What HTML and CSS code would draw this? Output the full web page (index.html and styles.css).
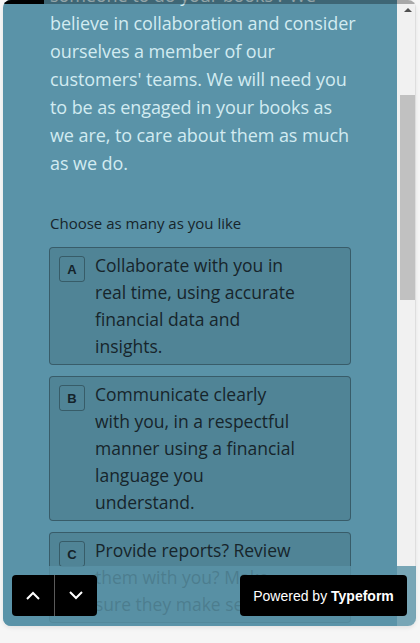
FILE: index.html
```html
<!DOCTYPE html>
<html>
<head>
<meta charset="utf-8">
<link rel="stylesheet" href="styles.css">
</head>
<body>
<div class="card">
  <div class="viewport">
    <div class="content">
      <p class="intro">someone to do your books'? We<br>believe in collaboration and consider<br>ourselves a member of our<br>customers' teams. We will need you<br>to be as engaged in your books as<br>we are, to care about them as much<br>as we do.</p>
      <p class="hint">Choose as many as you like</p>
      <ul class="choices">
        <li class="choice"><span class="key">A</span><span class="label">Collaborate with you in<br>real time, using accurate<br>financial data and<br>insights.</span></li>
        <li class="choice"><span class="key">B</span><span class="label">Communicate clearly<br>with you, in a respectful<br>manner using a financial<br>language you<br>understand.</span></li>
        <li class="choice"><span class="key">C</span><span class="label">Provide reports? Review<br>them with you? Make<br>sure they make sense</span></li>
      </ul>
    </div>
  </div>
  <div class="scrollbar">
    <span class="arrow"></span>
    <span class="thumb"></span>
  </div>
  <div class="progress"><span class="progress-fill"></span></div>
  <div class="footer">
    <div class="nav">
      <button class="nav-btn" aria-label="Previous">
        <svg width="14" height="9" viewBox="0 0 14 9"><polyline points="1,8 7,2 13,8" fill="none" stroke="#fff" stroke-width="2"/></svg>
      </button>
      <span class="divider"></span>
      <button class="nav-btn" aria-label="Next">
        <svg width="14" height="9" viewBox="0 0 14 9"><polyline points="1,1 7,7 13,1" fill="none" stroke="#fff" stroke-width="2"/></svg>
      </button>
    </div>
    <a class="powered">Powered by&nbsp;<b>Typeform</b></a>
  </div>
</div>
</body>
</html>
```
FILE: styles.css
```css
* { box-sizing: border-box; }
html, body { margin: 0; padding: 0; }
body {
  background: #f6f6f6;
  width: 420px;
  height: 643px;
  overflow: hidden;
}
.card {
  position: relative;
  margin-left: 3px;
  width: 413px;
  height: 626px;
  border-radius: 8px;
  overflow: hidden;
  display: flex;
  box-shadow: 0 2px 4px rgba(0,0,0,0.08);
}
.viewport {
  flex: 1;
  background: #5a93a8;
  overflow: hidden;
}
.content {
  padding-left: 47px;
  width: 349px;
  font-family: "Open Sans", "Noto Sans", sans-serif;
}
.intro {
  margin: -19px 0 0 0;
  font-size: 18px;
  line-height: 28px;
  letter-spacing: -0.08px;
  color: #d2ebf1;
  white-space: nowrap;
}
.hint {
  margin: 36px 0 0 0;
  font-size: 15px;
  line-height: 20px;
  color: #17252b;
}
.choices {
  list-style: none;
  margin: 14px 0 0 -1px;
  padding: 0;
  display: flex;
  flex-direction: column;
  gap: 11px;
  width: 302px;
}
.choice {
  display: flex;
  align-items: flex-start;
  gap: 10px;
  padding: 4px 9px;
  border: 1px solid rgba(0,0,0,0.3);
  border-radius: 4px;
  background: rgba(0,0,0,0.1);
}
.key {
  flex: none;
  margin-top: 4px;
  width: 26px;
  height: 26px;
  border: 1px solid rgba(0,0,0,0.3);
  border-radius: 3px;
  display: flex;
  align-items: center;
  justify-content: center;
  font-family: "Liberation Sans", Arial, sans-serif;
  font-weight: bold;
  font-size: 13px;
  color: #14232a;
}
.label {
  font-size: 17.5px;
  line-height: 27px;
  color: #17252b;
  white-space: nowrap;
}
.scrollbar {
  flex: none;
  width: 19px;
  background: #f1f1f1;
  border-right: 1px solid #dedede;
  padding-left: 3px;
  display: flex;
  flex-direction: column;
}
.arrow {
  margin: 8px 0 0 4px;
  width: 0;
  height: 0;
  border-left: 4px solid transparent;
  border-right: 4px solid transparent;
  border-bottom: 4px solid #505050;
}
.thumb {
  margin-top: 83px;
  width: 15px;
  height: 205px;
  background: #c1c1c1;
}
.progress {
  position: absolute;
  top: 0;
  left: 0;
  right: 0;
  height: 4px;
  background: rgba(0,0,0,0.3);
}
.progress-fill {
  display: block;
  width: 41px;
  height: 4px;
  background: #000;
}
.footer {
  position: absolute;
  left: 0;
  right: 0;
  bottom: 0;
  height: 60px;
  padding: 9px 9px 0 9px;
  background: rgba(90,147,168,0.8);
  display: flex;
  justify-content: space-between;
  align-items: flex-start;
}
.nav {
  display: flex;
  height: 41px;
  background: #000;
  border-radius: 4px;
}
.nav-btn {
  width: 42px;
  height: 41px;
  padding: 0;
  border: 0;
  background: transparent;
  display: flex;
  align-items: center;
  justify-content: center;
}
.divider {
  width: 1px;
  background: #5a5a5a;
}
.powered {
  width: 167px;
  height: 41px;
  background: #000;
  border-radius: 4px;
  color: #fff;
  font-family: "Liberation Sans", Arial, sans-serif;
  font-size: 14px;
  display: flex;
  align-items: center;
  justify-content: center;
}
.powered b { font-weight: bold; }
```
